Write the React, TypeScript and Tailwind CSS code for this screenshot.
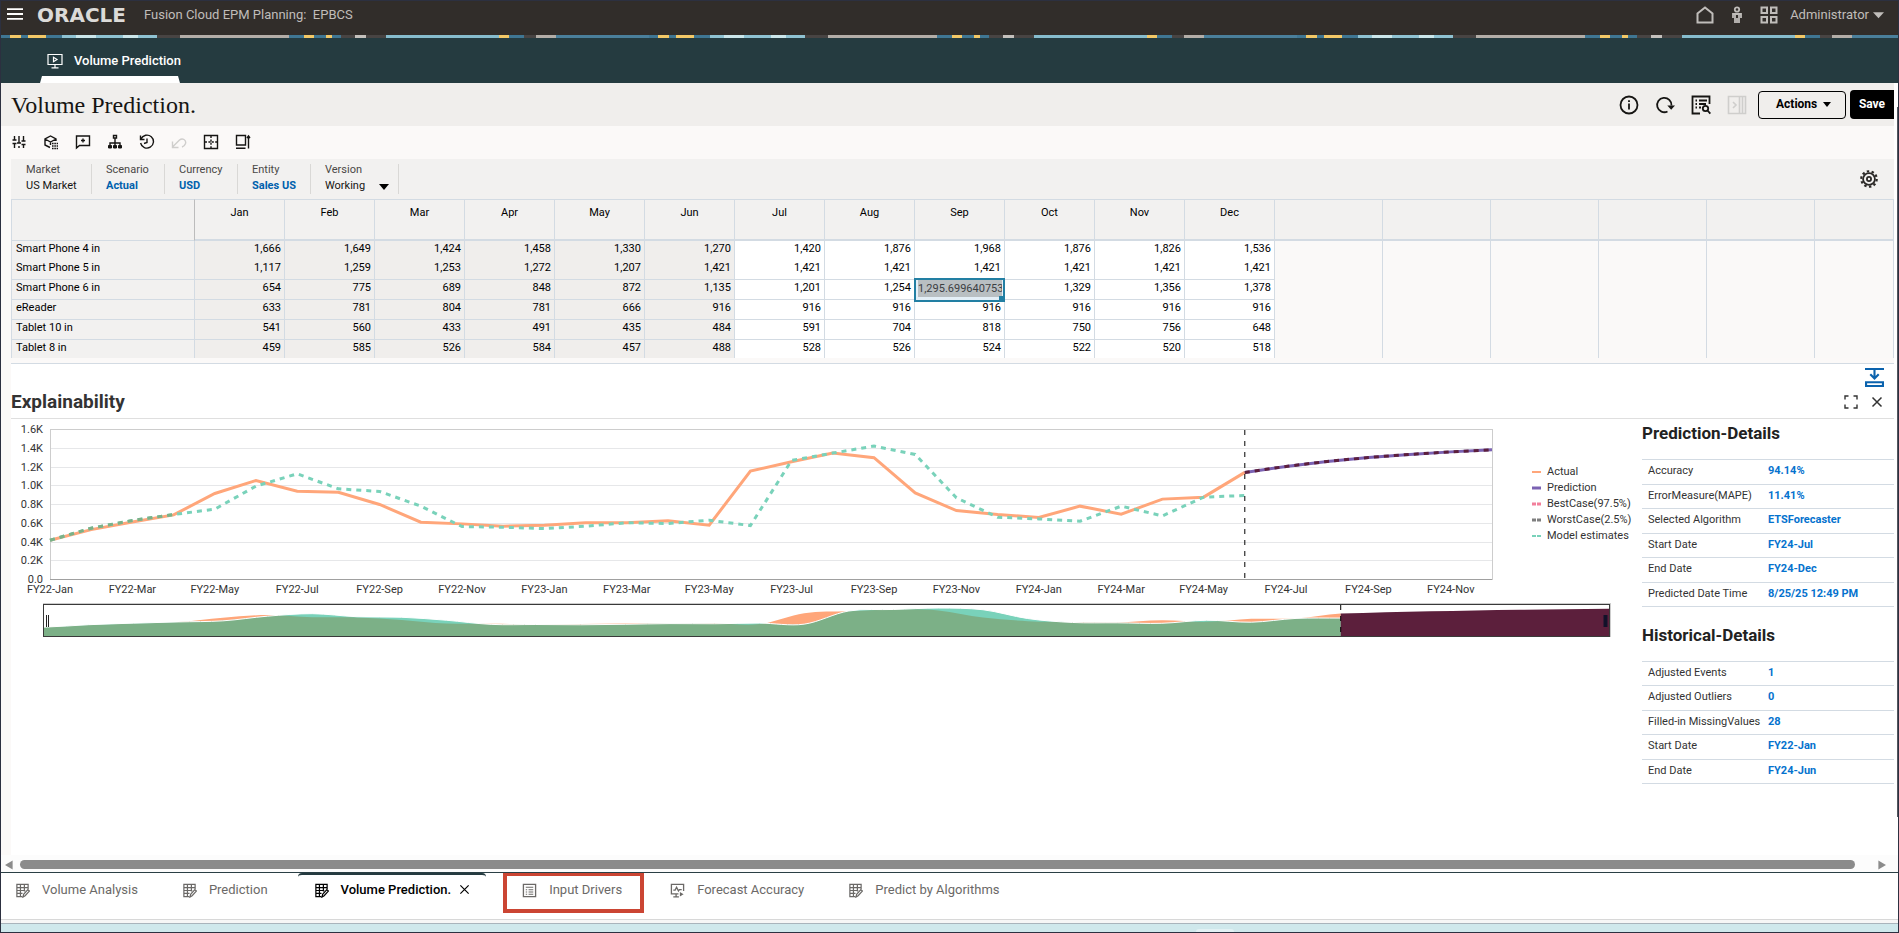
import { ReactNode, useState } from 'react';

type IconProps = {
  children: ReactNode;
  className?: string;
  box?: number;
};

function Icon({ children, className = 'w-4 h-4', box = 16 }: IconProps) {
  return (
    <svg
      viewBox={`0 0 ${box} ${box}`}
      className={`shrink-0 ${className}`}
      fill="none"
      stroke="currentColor"
      strokeWidth={1.4}
      aria-hidden="true"
    >
      {children}
    </svg>
  );
}

const months = ['Jan', 'Feb', 'Mar', 'Apr', 'May', 'Jun', 'Jul', 'Aug', 'Sep', 'Oct', 'Nov', 'Dec'];

const rows = [
  { name: 'Smart Phone 4 in', values: ['1,666', '1,649', '1,424', '1,458', '1,330', '1,270', '1,420', '1,876', '1,968', '1,876', '1,826', '1,536'] },
  { name: 'Smart Phone 5 in', values: ['1,117', '1,259', '1,253', '1,272', '1,207', '1,421', '1,421', '1,421', '1,421', '1,421', '1,421', '1,421'] },
  { name: 'Smart Phone 6 in', values: ['654', '775', '689', '848', '872', '1,135', '1,201', '1,254', '1,295.699640753', '1,329', '1,356', '1,378'] },
  { name: 'eReader', values: ['633', '781', '804', '781', '666', '916', '916', '916', '916', '916', '916', '916'] },
  { name: 'Tablet 10 in', values: ['541', '560', '433', '491', '435', '484', '591', '704', '818', '750', '756', '648'] },
  { name: 'Tablet 8 in', values: ['459', '585', '526', '584', '457', '488', '528', '526', '524', '522', '520', '518'] },
];

const predictionDetails = [
  ['Accuracy', '94.14%'],
  ['ErrorMeasure(MAPE)', '11.41%'],
  ['Selected Algorithm', 'ETSForecaster'],
  ['Start Date', 'FY24-Jul'],
  ['End Date', 'FY24-Dec'],
  ['Predicted Date Time', '8/25/25 12:49 PM'],
];

const historicalDetails = [
  ['Adjusted Events', '1'],
  ['Adjusted Outliers', '0'],
  ['Filled-in MissingValues', '28'],
  ['Start Date', 'FY22-Jan'],
  ['End Date', 'FY24-Jun'],
];

// Monthly series in thousands, FY22-Jan first
const actual = [
  0.413, 0.527, 0.609, 0.684, 0.912, 1.051, 0.937, 0.926, 0.795, 0.606, 0.588, 0.563,
  0.574, 0.6, 0.6, 0.62, 0.574, 1.151, 1.251, 1.343, 1.294, 0.919, 0.73, 0.688,
  0.656, 0.777, 0.691, 0.852, 0.873, 1.137,
];
const model = [
  0.413, 0.542, 0.624, 0.688, 0.745, 0.991, 1.122, 0.962, 0.934, 0.777, 0.559, 0.552,
  0.538, 0.563, 0.6, 0.592, 0.627, 0.57, 1.265, 1.343, 1.418, 1.329, 0.866, 0.659,
  0.641, 0.616, 0.777, 0.673, 0.873, 0.891,
];
const prediction = [1.137, 1.201, 1.254, 1.296, 1.329, 1.356, 1.378];
const forecastStart = 29;

const axisMonths = [
  'FY22-Jan', 'FY22-Mar', 'FY22-May', 'FY22-Jul', 'FY22-Sep', 'FY22-Nov',
  'FY23-Jan', 'FY23-Mar', 'FY23-May', 'FY23-Jul', 'FY23-Sep', 'FY23-Nov',
  'FY24-Jan', 'FY24-Mar', 'FY24-May', 'FY24-Jul', 'FY24-Sep', 'FY24-Nov',
];
const axisTicks = ['1.6K', '1.4K', '1.2K', '1.0K', '0.8K', '0.6K', '0.4K', '0.2K', '0.0'];

const legend = [
  { label: 'Actual', color: '#ffa67a', dash: undefined, width: 2 },
  { label: 'Prediction', color: '#7b62b3', dash: undefined, width: 3 },
  { label: 'BestCase(97.5%)', color: '#f27f9b', dash: '4 1', width: 3 },
  { label: 'WorstCase(2.5%)', color: '#7f7f7f', dash: '4 1', width: 3 },
  { label: 'Model estimates', color: '#79d2ba', dash: '4 1', width: 2 },
];

const plot = { left: 39, right: 1481, top: 10, bottom: 160 };
const overview = { left: 33, right: 1598, top: 186, bottom: 217 };

const chartX = (i: number) => plot.left + (i * (plot.right - plot.left)) / 35;
const chartY = (v: number) => plot.bottom - (v * (plot.bottom - plot.top)) / 1.6;
const overX = (i: number) => overview.left + (i * (overview.right - overview.left)) / 35;
const overY = (v: number) => overview.bottom - 1 - v * 19;

function linePoints(values: number[], start = 0) {
  return values.map((v, i) => `${chartX(i + start)},${chartY(v)}`).join(' ');
}

function smoothLine(values: number[], start = 0) {
  let d = `M${overX(start)} ${overY(values[0])}`;
  for (let i = 0; i < values.length - 1; i++) {
    const before = values[Math.max(i - 1, 0)];
    const after = values[Math.min(i + 2, values.length - 1)];
    const step = overX(1) - overX(0);
    const x = overX(i + start);
    const c1 = overY(values[i] + (values[i + 1] - before) / 6);
    const c2 = overY(values[i + 1] - (after - values[i]) / 6);
    d += ` C${x + step / 3} ${c1} ${x + (step * 2) / 3} ${c2} ${x + step} ${overY(values[i + 1])}`;
  }
  return d;
}

function smoothArea(values: number[], start = 0) {
  return `${smoothLine(values, start)} V${overview.bottom} H${overX(start)} Z`;
}

function ForecastChart() {
  return (
    <svg viewBox="0 0 1622 222" className="w-full h-auto text-[11px]" fill="#333333" role="img" aria-label="Prediction chart">
      {axisTicks.map((tick, i) => {
        const y = plot.top + (i * (plot.bottom - plot.top)) / 8;
        return (
          <g key={tick}>
            <line x1={plot.left} x2={plot.right} y1={Math.round(y) + 0.5} y2={Math.round(y) + 0.5} stroke="#e6e7e9" />
            <text x="32" y={Math.round(y) + 4} textAnchor="end">{tick}</text>
          </g>
        );
      })}
      <rect x={plot.left + 0.5} y={plot.top + 0.5} width={plot.right - plot.left} height={plot.bottom - plot.top} fill="none" stroke="#cdcdcd" />
      <line x1={plot.left} x2={plot.right} y1={plot.bottom + 0.5} y2={plot.bottom + 0.5} stroke="#a0a0a0" />

      {axisMonths.map((label, i) => (
        <text key={label} x={chartX(i * 2)} y="174" textAnchor="middle">{label}</text>
      ))}

      <polyline points={linePoints(actual)} fill="none" stroke="#ffa67a" strokeWidth="3" />
      <polyline points={linePoints(model)} fill="none" stroke="#79d2ba" strokeWidth="3" strokeDasharray="5 5" />
      <polyline points={linePoints(model.slice(0, 4))} fill="none" stroke="#7cb087" strokeWidth="3" strokeDasharray="5 5" />
      <polyline points={linePoints(prediction, forecastStart)} fill="none" stroke="#7b62b3" strokeWidth="3" />
      <polyline points={linePoints(prediction, forecastStart)} fill="none" stroke="#5c1f3c" strokeWidth="3" strokeDasharray="5 5" />
      <line x1={chartX(forecastStart)} x2={chartX(forecastStart)} y1={plot.top + 1} y2={plot.bottom} stroke="#000000" strokeDasharray="5 6" />

      {legend.map((item, i) => (
        <g key={item.label}>
          <line x1="1521" x2="1530" y1={53 + i * 16} y2={53 + i * 16} stroke={item.color} strokeWidth={item.width} strokeDasharray={item.dash} />
          <text x="1536" y={56 + i * 16}>{item.label}</text>
        </g>
      ))}

      {/* Overview with range handles */}
      <defs>
        <clipPath id="underActual">
          <path d={smoothArea(actual)} />
        </clipPath>
      </defs>
      <path d={smoothArea(actual)} fill="#ffa67a" />
      <path d={smoothArea(model)} fill="#79d2ba" />
      <path d={smoothArea(model)} fill="#7cb087" clipPath="url(#underActual)" />
      <path d={smoothLine(model)} fill="none" stroke="#ffffff" strokeWidth="1" />
      <path d={smoothArea(prediction, forecastStart)} fill="#5c1f3c" />
      <line x1={overX(forecastStart)} x2={overX(forecastStart)} y1={overview.top} y2={overview.bottom} stroke="#000000" strokeDasharray="5 6" />
      <rect x={overview.left - 0.5} y={overview.top - 1.5} width={overview.right - overview.left + 2} height={overview.bottom - overview.top + 2} fill="none" stroke="#cdcdcd" />
      <rect x={overview.left - 0.5} y={overview.top - 0.5} width={overview.right - overview.left + 1} height={overview.bottom - overview.top + 1} fill="none" stroke="#3a3a3a" />
      <path d="M35.5 196v12M37.5 196v12" stroke="#222222" />
      <path d="M1593.5 196v12M1595.5 196v12" stroke="#12122a" strokeWidth="2" />
    </svg>
  );
}

function DetailsTable({ title, items, className }: { title: string; items: string[][]; className: string }) {
  return (
    <section>
      <h3 className="text-[17px] leading-5 font-bold text-[#222222]">{title}</h3>
      <table className={`w-full mt-4 border-t border-[#d3dbe3] text-[11px] ${className}`}>
        <tbody>
          {items.map(([label, value]) => (
            <tr key={label} className="border-b border-[#d3dbe3]">
              <th scope="row" className="w-[126px] pl-1.5 pb-px text-left font-normal text-[#333333]">{label}</th>
              <td className="pb-px font-bold text-[#0572ce]">{value}</td>
            </tr>
          ))}
        </tbody>
      </table>
    </section>
  );
}

function DataGrid() {
  const [cell, setCell] = useState('1,295.699640753');

  return (
    <div className="border-b border-[#d3dbe3] pb-[5px]">
      <table className="w-full table-fixed border-separate border-spacing-0 text-[11px] text-black">
        <colgroup>
          <col className="w-[184px]" />
          {months.map((m) => <col key={m} className="w-[90px]" />)}
          <col className="w-[108px]" />
          <col className="w-[108px]" />
          <col className="w-[108px]" />
          <col className="w-[108px]" />
          <col className="w-[108px]" />
          <col />
        </colgroup>
        <thead>
          <tr className="h-[42px] bg-[#f2f1f0]">
            <td className="border border-[#d3dbe3] border-r-[#bcbcbc]" />
            {months.map((m) => (
              <th key={m} scope="col" className="border-t border-r border-b-2 border-[#d3dbe3] pt-1 align-top leading-[18px] font-normal text-center">
                {m}
              </th>
            ))}
            {[1, 2, 3, 4, 5, 6].map((n) => (
              <td key={n} className="border-t border-r border-b-2 border-[#d3dbe3]" />
            ))}
          </tr>
        </thead>
        <tbody>
          {rows.map((row, r) => {
            const line = r === 0 || r === 5 ? '' : 'border-b';
            const height = r === 0 ? 'h-[19px]' : r === 5 ? 'h-[18px]' : 'h-5';
            return (
              <tr key={row.name} className={height}>
                <th scope="row" className={`border-l border-r border-[#d3dbe3] bg-[#f2f1f0] pl-1 align-top text-left leading-[15px] font-normal ${line}`}>
                  {row.name}
                </th>
                {row.values.map((value, c) => (
                  <td
                    key={c}
                    className={`relative border-r border-[#d3dbe3] pr-[3px] align-top text-right leading-[15px] ${line} ${c < 6 ? 'bg-[#f0eeec]' : 'bg-white'}`}
                  >
                    {r === 2 && c === 8 ? (
                      <div className="absolute -top-0.5 -left-px -right-px -bottom-[3px] z-10 flex border-2 border-[#227fa3] bg-[#e4eff7] pb-[3px] pl-0.5 pr-px">
                        <input
                          aria-label="Smart Phone 6 in, Sep"
                          value={cell}
                          onChange={(e) => setCell(e.target.value)}
                          className="w-full min-w-0 bg-[#b9bfc2] text-[11px] text-[#3c4043] outline-none"
                        />
                        <span className="absolute right-0 bottom-0 w-1 h-1 bg-[#227fa3]" />
                      </div>
                    ) : (
                      value
                    )}
                  </td>
                ))}
                {[1, 2, 3, 4, 5, 6].map((n) => (
                  <td key={n} className="border-r border-[#d3dbe3] bg-[#faf9f8]" />
                ))}
              </tr>
            );
          })}
        </tbody>
      </table>
    </div>
  );
}

function FormIcon() {
  return (
    <Icon className="w-[15px] h-[15px]">
      <path d="M8 14.500H2V1.500h12v5M2 5h12M2 8h9M2 11h6M5.800 1.500v13M10 1.500v7.500" strokeWidth={1.300} />
      <path d="M8.500 15l.7-3 4.500-5 1.600 1.600-4.500 5z" fill="#ffffff" strokeWidth={1.300} />
    </Icon>
  );
}

function ListIcon() {
  return (
    <Icon className="w-[15px] h-[15px]">
      <path d="M1.500 1.500h13v13h-13z" />
      <path d="M4 4.500h8M4 7.200h1.500M7 7.200h5M4 9.600h1.500M7 9.600h5M4 12h1.500M7 12h5" strokeWidth={1.200} />
    </Icon>
  );
}

function AccuracyIcon() {
  return (
    <Icon className="w-[15px] h-[15px]">
      <path d="M9 11.500H1.500v-10h13v7M3.500 7.500h2l1.500-3 2 4 1-1.500h2.500M6.500 11.500v3M3.500 14.800h6" />
      <path d="M10.500 9.500v5l4-2.500z" fill="currentColor" stroke="none" />
    </Icon>
  );
}

const stripColors: [number, string][] = [
  [0, '#3f7693'], [9, '#f3c867'], [20, '#3f7693'], [27, '#f3c867'], [45, '#3f7693'],
  [61, '#8fc2d2'], [75, '#cbe6ea'], [95, '#8fc2d2'], [122, '#cbe6ea'], [137, '#8fc2d2'],
  [156, '#484443'], [179, '#b3ada7'], [288, '#3f7693'], [303, '#f3c867'], [313, '#3f7693'],
  [325, '#f3c867'], [331, '#3f7693'], [340, '#484443'], [354, '#c4c0bc'], [365, '#484443'],
  [385, '#86bccd'], [498, '#f3c867'], [508, '#3f7693'], [523, '#484443'], [535, '#b3ada7'],
  [555, '#4a7f9b'],
];

function BrandStrip() {
  return (
    <svg className="block w-full h-[3px]" aria-hidden="true">
      <defs>
        <pattern id="strip" width="648" height="3" patternUnits="userSpaceOnUse">
          {stripColors.map(([x, color], i) => (
            <rect key={x} x={x} width={(stripColors[i + 1]?.[0] ?? 648) - x} height="3" fill={color} />
          ))}
        </pattern>
      </defs>
      <rect width="100%" height="3" fill="url(#strip)" />
    </svg>
  );
}

const dimensions = [
  { label: 'Market', value: 'US Market', link: false, width: 'w-[66px]' },
  { label: 'Scenario', value: 'Actual', link: true, width: 'w-[73px]' },
  { label: 'Currency', value: 'USD', link: true, width: 'w-[73px]' },
  { label: 'Entity', value: 'Sales US', link: true, width: 'w-[73px]' },
];

export default function App() {
  const [activeTab, setActiveTab] = useState('Volume Prediction.');

  const tabs = [
    { name: 'Volume Analysis', icon: <FormIcon />, box: 'pl-[14px] pr-6' },
    { name: 'Prediction', icon: <FormIcon />, box: 'pl-5 pr-[30px]' },
    { name: 'Volume Prediction.', icon: <FormIcon />, box: 'pl-4 pr-4' },
    { name: 'Input Drivers', icon: <ListIcon />, box: 'pl-[15px] pr-[18px]' },
    { name: 'Forecast Accuracy', icon: <AccuracyIcon />, box: 'pl-[26px] pr-5' },
    { name: 'Predict by Algorithms', icon: <FormIcon />, box: 'pl-6 pr-6' },
  ];

  return (
    <div className="flex flex-col min-h-screen border border-[#2c3040] bg-white font-['Roboto','Liberation_Sans',sans-serif]">
      {/* Global header */}
      <header className="flex items-start h-[34px] bg-[#312d2a] text-[#c0bdba]">
        <button aria-label="Navigator" className="mt-[5px] ml-[5px] text-white">
          <Icon className="w-[18px] h-4" box={18}>
            <path d="M0 3.500h18M0 9h18M0 14.500h18" strokeWidth={2} />
          </Icon>
        </button>
        <span className="w-[94px] ml-[13px] pt-1 font-['DejaVu_Sans',sans-serif] text-xl leading-5 font-bold text-[#dcdad8]">ORACLE</span>
        <span className="ml-[13px] pt-1 text-[13px] leading-5 whitespace-pre">Fusion Cloud EPM Planning:  EPBCS</span>
        <div className="flex items-center ml-auto mr-[14px] pt-1 h-6">
          <button aria-label="Home">
            <Icon className="w-[18px] h-[18px]" box={18}>
              <path d="M1.500 16.500v-9L9 1.500l7.500 6v9z" strokeWidth={2} />
            </Icon>
          </button>
          <button aria-label="Accessibility" className="ml-[14px]">
            <Icon className="w-[18px] h-[18px]" box={18}>
              <circle cx="9" cy="3.500" r="2.200" strokeWidth={1.800} />
              <path d="M5 12V8h8v4M7 8v9M11 8v9M9 12v5" strokeWidth={1.800} />
            </Icon>
          </button>
          <button aria-label="Cards" className="ml-[14px]">
            <Icon className="w-[18px] h-[18px]" box={18}>
              <path d="M1.500 1.500h5.500v5.500h-5.500zM11 1.500h5.500v5.500h-5.500zM1.500 11h5.500v5.500h-5.500zM11 11h5.500v5.500h-5.500z" strokeWidth={2} />
            </Icon>
          </button>
          <button className="flex items-center gap-1 ml-3 text-[13px]">
            Administrator
            <Icon className="w-[11px] h-[11px]" box={10}>
              <path d="M0 2h10L5 7.500z" fill="currentColor" stroke="none" />
            </Icon>
          </button>
        </div>
      </header>
      <BrandStrip />

      {/* Cluster tab */}
      <nav className="flex h-[45px] pl-[39px] bg-[#253b40] text-white">
        <div className="flex flex-col w-[141px]">
          <a href="#" className="flex items-center flex-1 gap-[11px] pl-[7px] pt-2 text-[13px] font-medium whitespace-nowrap">
            <Icon className="w-4 h-4">
              <path d="M1 1.500h14v10H1zM8 11.500v3M4.500 14.800h7" strokeWidth={1.200} />
              <path d="M6.500 4.300v4.400L10 6.500z" strokeWidth={1.200} />
            </Icon>
            Volume Prediction
          </a>
          <svg viewBox="0 0 140 7" className="w-[140px] h-[7px]" aria-hidden="true">
            <path d="M2 0h136l2 7H0z" fill="#ffffff" />
          </svg>
        </div>
      </nav>

      <div className="flex flex-1">
        <main className="flex flex-col flex-1 min-w-0">
          {/* Title bar */}
          <div className="flex items-center h-[43px] pl-2.5 bg-[#f0eeec] text-[#161513]">
            <h1 className="font-['Liberation_Serif',serif] text-2xl leading-8">Volume Prediction.</h1>
            <div className="flex items-center ml-auto">
              <button aria-label="Instructions">
                <Icon className="w-5 h-5" box={20}>
                  <circle cx="10" cy="10" r="8.500" strokeWidth={1.800} />
                  <path d="M10 8.500v6M10 5.200v1.800" strokeWidth={1.800} />
                </Icon>
              </button>
              <button aria-label="Refresh" className="ml-4">
                <Icon className="w-5 h-5" box={20}>
                  <path d="M12.500 16.500A7.200 7.200 0 1 1 16.500 10.500" strokeWidth={1.800} />
                  <path d="M12.300 10.500h7.700l-3.800 4.200z" fill="currentColor" stroke="none" />
                </Icon>
              </button>
              <button aria-label="Details" className="ml-4">
                <Icon className="w-5 h-5" box={20}>
                  <path d="M9 18.500H1.500v-17h17V9" strokeWidth={1.800} />
                  <path d="M4.500 5.500H6M8 5.500h8M4.500 9H6M8 9h7M4.500 12.500H6M8 12.500h2" strokeWidth={1.800} />
                  <circle cx="14.500" cy="13.500" r="2.700" strokeWidth={1.800} />
                  <path d="M16.500 15.500l2.800 3.200" strokeWidth={1.800} />
                </Icon>
              </button>
              <button aria-label="Open panel" disabled className="ml-4 text-[#cfcecc]">
                <Icon className="w-5 h-5" box={20}>
                  <path d="M1.500 1.500h17v17h-17zM12.500 1.500v17M15.500 1.500v17M6 7l3 3-3 3" strokeWidth={1.600} />
                </Icon>
              </button>
              <button className="flex items-center justify-between w-[88px] h-7 ml-[11px] pl-[17px] pr-[14px] pb-px border border-black rounded-sm text-xs font-bold text-black">
                Actions
                <Icon className="w-2 h-2" box={8}>
                  <path d="M0 2h8L4 7z" fill="currentColor" stroke="none" />
                </Icon>
              </button>
              <button className="h-[29px] w-[44px] ml-1 pb-0.5 rounded-l-sm bg-black text-xs font-bold text-white">Save</button>
            </div>
          </div>

          <div className="flex flex-col flex-1 pl-2.5 bg-[#fbf9f8]">
            {/* Toolbar */}
            <div className="flex items-center gap-4 h-[33px] pb-0.5 text-[#161513]">
              <button aria-label="Adjust">
                <Icon>
                  <path d="M3.500 2v4M3.500 10v4M8 2v7M8 12v2M12.500 2v5M12.500 11v3M1.500 6h4M1.500 9.500h4M6 9h4M10.500 7h4M10.500 10.500h4" />
                </Icon>
              </button>
              <button aria-label="Grid spread">
                <Icon>
                  <path d="M7 13.500L2 11V5l5.500-3L13 5v2M2 5l5.500 3L13 5M7.500 8v3" />
                  <path d="M9 9.500h6M9 12h6M9 14.500h6" strokeDasharray="1.600 .7" strokeWidth={1.600} />
                </Icon>
              </button>
              <button aria-label="Comments">
                <Icon>
                  <path d="M1.500 14V2h13v9.500H4.500zM8 4.500v4M6 6.500h4" />
                </Icon>
              </button>
              <button aria-label="Hierarchy">
                <Icon>
                  <path d="M8 4v9M3 13V9h10v4M6.500 1.500h3v2.500h-3z" />
                  <path d="M1.500 11.500h3v2.500h-3zM6.500 11.500h3v2.500h-3zM11.500 11.500h3v2.500h-3z" fill="currentColor" strokeWidth={1} />
                </Icon>
              </button>
              <button aria-label="History">
                <Icon>
                  <path d="M2 5a6.500 6.500 0 1 1-.4 4M1.500 1.500v4h4M8 4.500V8.500L5 9.500" />
                </Icon>
              </button>
              <button aria-label="Undo" disabled className="text-[#cfcecc]">
                <Icon>
                  <path d="M1.500 7.500v6h6M1.500 13l7-7c3-2.500 7 0 6 3.500-.5 1.500-2 3-3.500 3.500" />
                </Icon>
              </button>
              <button aria-label="Freeze">
                <Icon>
                  <path d="M1.500 1.500h13v13h-13z" />
                  <path d="M8 2v12M2 8h12" strokeDasharray="2 1.400" />
                </Icon>
              </button>
              <button aria-label="Resize">
                <Icon>
                  <path d="M1.500 1.500h9v9.500h-9zM1 14.300h9.500M13.500 2v12.500M12 4l1.500-2L15 4" />
                </Icon>
              </button>
            </div>

            {/* Point of view */}
            <div className="flex items-center h-10 pl-[15px] pr-4 bg-[#f2f1f0]">
              {dimensions.map((dim, i) => (
                <div key={dim.label} className={`${dim.width} ${i === 0 ? '' : 'pl-[14px]'} h-[30px] border-r border-[#d9d8d6] text-[11px] leading-4 whitespace-nowrap`}>
                  <div className="leading-3 pb-0.5 text-[#4a4846]">{dim.label}</div>
                  {dim.link ? (
                    <a href="#" className="font-bold text-[#0061ad]">{dim.value}</a>
                  ) : (
                    <div className="text-[#161513]">{dim.value}</div>
                  )}
                </div>
              ))}
              <div className="flex w-[88px] h-[30px] pl-[14px] border-r border-[#d9d8d6] text-[11px]">
                <div>
                  <label htmlFor="version" className="block leading-3 pb-0.5 text-[#4a4846]">Version</label>
                  <select id="version" className="block appearance-none w-[54px] leading-4 text-[#161513]">
                    <option>Working</option>
                  </select>
                </div>
                <Icon className="w-[10px] h-[10px] mt-[18px]" box={10}>
                  <path d="M0 2h10L5 8z" fill="#000000" stroke="none" />
                </Icon>
              </div>
              <button aria-label="Settings" className="ml-auto text-[#2b2927]">
                <Icon className="w-[18px] h-[18px]" box={20}>
                  <circle cx="10" cy="10" r="6.600" strokeWidth={2} />
                  <circle cx="10" cy="10" r="2.300" strokeWidth={2} />
                  <circle cx="10" cy="10" r="8.600" strokeWidth={2.400} strokeDasharray="2.700 2.700" />
                </Icon>
              </button>
            </div>

            <DataGrid />

            {/* Explainability */}
            <div className="flex-1 bg-white">
              <div className="flex justify-between h-[55px] border-b border-[#dfdfdf]">
                <h2 className="self-end pb-1 text-[19px] leading-6 font-bold text-[#333333]">Explainability</h2>
                <div className="flex flex-col items-end pt-1">
                  <button aria-label="Collapse panel" className="mr-[10px] text-[#0a62ad]">
                    <Icon className="w-[19px] h-[19px]" box={18}>
                      <path d="M0 1h18M9 1v8.500M5 6l4 4 4-4M1 13.500h16v3.500H1z" strokeWidth={2} />
                    </Icon>
                  </button>
                  <div className="flex items-center mt-2 mr-[11px] gap-[13px] text-[#333333]">
                    <button aria-label="Maximize">
                      <Icon className="w-[14px] h-[14px]" box={14}>
                        <path d="M1 4.500V1h3.500M9.500 1H13v3.500M13 9.500V13H9.500M4.500 13H1V9.500" strokeWidth={1.400} />
                      </Icon>
                    </button>
                    <button aria-label="Close">
                      <Icon className="w-3 h-3" box={12}>
                        <path d="M1.500 1.500l9 9M10.500 1.500l-9 9" strokeWidth={1.500} />
                      </Icon>
                    </button>
                  </div>
                </div>
              </div>
              <div className="flex gap-[9px]">
                <div className="flex-1 min-w-0">
                  <ForecastChart />
                </div>
                <aside className="w-[252px] pt-1">
                  <DetailsTable title="Prediction-Details" items={predictionDetails} className="h-[148px]" />
                  <div className="h-[18px]" />
                  <DetailsTable title="Historical-Details" items={historicalDetails} className="h-[123px]" />
                </aside>
              </div>
            </div>
          </div>
        </main>
        <div className="flex flex-col justify-start w-1 pt-6 items-end bg-white">
          <div className="w-px h-[710px] bg-[#55575f]" />
        </div>
      </div>

      {/* Horizontal scroll bar */}
      <div className="flex items-center h-[17px] pt-0.5 pl-1 pr-3 bg-[#fcfcfc]">
        <Icon className="w-[9px] h-[10px]" box={10}>
          <path d="M8.500 0v10L0 5z" fill="#8b8b8b" stroke="none" />
        </Icon>
        <div className="flex-1 h-[9px] ml-[6px] mr-[22px] rounded-full bg-[#8b8b8b]" />
        <Icon className="w-[9px] h-[10px]" box={10}>
          <path d="M1.500 0v10L10 5z" fill="#8b8b8b" stroke="none" />
        </Icon>
      </div>

      {/* Horizontal tabs */}
      <footer className="border-t border-[#2a3f45]">
        <div className="flex items-start h-[46px] bg-white text-[13px] text-[#6b6967]">
          {tabs.map((tab) => {
            const active = tab.name === activeTab;
            const boxed = tab.name === 'Input Drivers';
            return (
              <div
                key={tab.name}
                className={`flex items-start h-10 whitespace-nowrap ${tab.box} ${
                  boxed ? 'ml-[17px] border-4 border-t-[3px] pt-1 border-[#cb4533]' : ''
                } ${active ? 'rounded-t-sm border-t-2 pt-[5px] border-[#253b40] font-medium text-black' : ''} ${
                  !boxed && !active ? 'pt-[7px]' : ''
                }`}
              >
                <button onClick={() => setActiveTab(tab.name)} className="flex items-center h-5 gap-3">
                  {tab.icon}
                  {tab.name}
                </button>
                {active && (
                  <button aria-label="Close tab" className="flex items-center h-[18px] ml-2">
                    <Icon className="w-[11px] h-[11px]" box={12}>
                      <path d="M1.500 1.500l9 9M10.500 1.500l-9 9" strokeWidth={1.300} />
                    </Icon>
                  </button>
                )}
              </div>
            );
          })}
        </div>
        <div className="h-1 border-t border-[#d8d8d8] bg-[#f6f6f6]" />
        <div className="flex items-end h-[9px] border-t border-[#a9b4bc] bg-[#cfe8ec]">
          <div className="w-[38px] h-[3px] ml-[63%] rounded-t-sm bg-[#e2f1f4]" />
        </div>
      </footer>
    </div>
  );
}
